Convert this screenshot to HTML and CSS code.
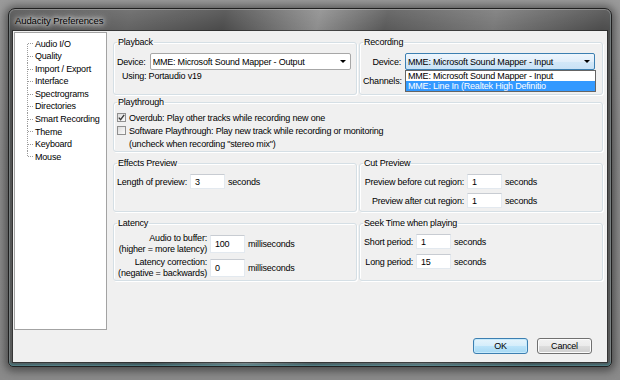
FILE: index.html
```html
<!DOCTYPE html>
<html>
<head>
<meta charset="utf-8">
<title>Audacity Preferences</title>
<link rel="stylesheet" href="styles.css">
</head>
<body>
<div class="window">
  <div class="titlebar"><span class="title">Audacity Preferences</span></div>
  <div class="client">
    <div class="main">
      <ul class="tree">
        <li>Audio I/O</li>
        <li>Quality</li>
        <li>Import / Export</li>
        <li>Interface</li>
        <li>Spectrograms</li>
        <li>Directories</li>
        <li>Smart Recording</li>
        <li>Theme</li>
        <li>Keyboard</li>
        <li>Mouse</li>
      </ul>
      <div class="pane">
        <div class="row row-io">
          <fieldset class="group">
            <legend>Playback</legend>
            <div class="field">
              <span class="label">Device:</span>
              <div class="combo combo-play"><span class="combo-text">MME: Microsoft Sound Mapper - Output</span><span class="arrow"></span></div>
            </div>
            <div class="using">Using: Portaudio v19</div>
          </fieldset>
          <fieldset class="group">
            <legend>Recording</legend>
            <div class="rec-grid">
              <span class="label r">Device:</span>
              <div class="combo-wrap">
                <div class="combo combo-focus"><span class="combo-text">MME: Microsoft Sound Mapper - Input</span><span class="arrow"></span></div>
                <ul class="dropdown">
                  <li>MME: Microsoft Sound Mapper - Input</li>
                  <li class="sel">MME: Line In (Realtek High Definitio</li>
                </ul>
              </div>
              <span class="label r">Channels:</span>
              <div class="combo combo-hidden"></div>
            </div>
          </fieldset>
        </div>
        <fieldset class="group playthrough">
          <legend>Playthrough</legend>
          <div class="check"><span class="cb"><svg viewBox="0 0 9 9" width="9" height="9"><path d="M1.8 4.6 L3.6 6.6 L7.2 1.8" fill="none" stroke="#3a3a3a" stroke-width="1.4"/></svg></span>Overdub: Play other tracks while recording new one</div>
          <div class="check"><span class="cb"></span>Software Playthrough: Play new track while recording or monitoring</div>
          <div class="note">(uncheck when recording "stereo mix")</div>
        </fieldset>
        <div class="row row-prev">
          <fieldset class="group">
            <legend>Effects Preview</legend>
            <div class="field pad">
              <span class="label">Length of preview:</span>
              <span class="input">3</span>
              <span class="unit">seconds</span>
            </div>
          </fieldset>
          <fieldset class="group">
            <legend>Cut Preview</legend>
            <div class="grid cut">
              <span class="label r">Preview before cut region:</span>
              <span class="input">1</span>
              <span class="unit">seconds</span>
              <span class="label r">Preview after cut region:</span>
              <span class="input">1</span>
              <span class="unit">seconds</span>
            </div>
          </fieldset>
        </div>
        <div class="row row-lat">
          <fieldset class="group">
            <legend>Latency</legend>
            <div class="grid lat">
              <span class="label r two">Audio to buffer:<br>(higher = more latency)</span>
              <span class="input tall">100</span>
              <span class="unit">milliseconds</span>
              <span class="label r two">Latency correction:<br>(negative = backwards)</span>
              <span class="input tall">0</span>
              <span class="unit">milliseconds</span>
            </div>
          </fieldset>
          <fieldset class="group">
            <legend>Seek Time when playing</legend>
            <div class="grid seek">
              <span class="label r">Short period:</span>
              <span class="input">1</span>
              <span class="unit">seconds</span>
              <span class="label r">Long period:</span>
              <span class="input">15</span>
              <span class="unit">seconds</span>
            </div>
          </fieldset>
        </div>
      </div>
    </div>
    <div class="buttons">
      <button class="btn btn-default">OK</button>
      <button class="btn">Cancel</button>
    </div>
  </div>
</div>
</body>
</html>
```
FILE: styles.css
```css
* { box-sizing: border-box; }

html, body {
  margin: 0;
  width: 620px;
  height: 380px;
  overflow: hidden;
}

body {
  background: linear-gradient(180deg, #9a9a9a 0%, #8e8e8e 40%, #8a8a8a 100%);
  font-family: "Liberation Sans", Arial, sans-serif;
  font-size: 9px;
  letter-spacing: -0.2px;
  color: #000;
}

.window {
  margin: 8px 0 0 8px;
  width: 604px;
  height: 359px;
  display: flex;
  flex-direction: column;
  border: 1px solid #202020;
  border-radius: 7px 7px 5px 5px;
  padding: 0 4px 4px 4px;
  background:
    linear-gradient(180deg, rgba(255,255,255,0.12) 0, rgba(255,255,255,0) 22px),
    linear-gradient(102deg, #4e4e4e 0%, #626262 18%, #4a4a4a 32%, #8c8c8c 46%, #585858 56%, #777 72%, #4c4c4c 88%, #5a5a5a 100%);
  box-shadow: 0 1px 9px 3px rgba(0,0,0,0.45), inset 0 -3px 3px -1px rgba(50,120,130,0.7), inset 0 0 0 1px rgba(255,255,255,0.25);
}

.titlebar {
  height: 22px;
  display: flex;
  align-items: center;
  padding-left: 2px;
}

.title {
  font-size: 9.5px;
  letter-spacing: -0.1px;
  color: #000;
  text-shadow: 0 0 4px #fff, 0 0 7px rgba(255,255,255,0.9), 0 0 10px rgba(255,255,255,0.7);
}

.client {
  flex: 1;
  background: #f0f0f0;
  display: flex;
  flex-direction: column;
  box-shadow: 0 0 0 1px rgba(30,30,30,0.6);
}

.main {
  display: flex;
  gap: 6px;
  padding: 1px 4px 0 1px;
}

.tree {
  list-style: none;
  margin: 0;
  width: 93px;
  height: 298px;
  background: #fff;
  border: 1px solid #a3a3a3;
  padding: 4.7px 0 0 12px;
}

.tree li {
  height: 12.56px;
  line-height: 12.56px;
  padding-left: 8px;
  white-space: nowrap;
  background-image:
    repeating-linear-gradient(180deg, #9c9c9c 0 1px, transparent 1px 2px),
    repeating-linear-gradient(90deg, #9c9c9c 0 1px, transparent 1px 2px);
  background-size: 1px 100%, 6px 1px;
  background-position: 0 0, 1px 50%;
  background-repeat: no-repeat;
}

.tree li:first-child { background-size: 1px 50%, 6px 1px; background-position: 0 100%, 1px 50%; }
.tree li:last-child { background-size: 1px 50%, 6px 1px; background-position: 0 0, 1px 50%; }

.pane {
  flex: 1;
  display: flex;
  flex-direction: column;
  margin-top: 5px;
}

.row {
  display: flex;
  gap: 2px;
}

.row > .group { flex: 1 1 0; min-width: 0; }

.group {
  margin: 0;
  padding: 0 3px;
  border: 1px solid #d5dfe5;
  border-radius: 3px;
  box-shadow: inset 1px 1px 0 #fff, 1px 1px 0 #fff;
  min-width: 0;
}

.group legend {
  padding: 0 1px;
  margin-left: 0;
  line-height: 11px;
  height: 11px;
}

.row-io .group { height: 58px; }
.playthrough { height: 55px; margin-top: 2px; }
.row-prev { margin-top: 6px; }
.row-prev .group { height: 54px; }
.row-lat { margin-top: 6px; }
.row-lat .group { height: 63px; }

.label { white-space: nowrap; }
.r { text-align: right; }

.field {
  display: flex;
  align-items: center;
  gap: 4px;
  margin-top: 5px;
}

.combo {
  position: relative;
  height: 17px;
  background: #fff;
  border: 1px solid #a7a7a7;
  border-radius: 2px;
  display: flex;
  align-items: center;
  padding-left: 2px;
}

.combo-play { width: 201px; }

.combo-text { flex: 1; white-space: nowrap; overflow: hidden; }

.arrow {
  width: 0;
  height: 0;
  border-left: 3px solid transparent;
  border-right: 3px solid transparent;
  border-top: 3px solid #000;
  margin-right: 4px;
}

.using {
  margin: 1px 0 0 5px;
  line-height: 11px;
}

.rec-grid {
  display: grid;
  grid-template-columns: 38px 190px;
  column-gap: 4px;
  row-gap: 2px;
  align-items: center;
  margin-top: 5px;
}

.combo-wrap { position: relative; }

.combo-focus {
  border-color: #3c7fb1;
  background: linear-gradient(180deg, #eef6fd 0%, #e1eefa 50%, #d3e8f8 51%, #c9e2f6 100%);
}

.combo-hidden { height: 17px; }

.dropdown {
  position: absolute;
  top: 17px;
  left: 0;
  width: 191px;
  margin: 0;
  padding: 0;
  list-style: none;
  background: #fff;
  border: 1px solid #646464;
  z-index: 2;
}

.dropdown li {
  height: 10px;
  line-height: 10px;
  padding-left: 2px;
  white-space: nowrap;
  overflow: hidden;
}

.dropdown li.sel {
  background: #3399ff;
  color: #fff;
}

.check {
  display: flex;
  align-items: center;
  height: 13px;
  gap: 3px;
}

.playthrough .check:first-of-type { margin-top: 3px; }

.cb {
  width: 9px;
  height: 9px;
  border: 1px solid #8f8f8f;
  background: linear-gradient(135deg, #dcdcdc, #fbfbfb);
  display: flex;
  align-items: center;
  justify-content: center;
  flex: none;
}

.cb svg { display: block; margin: -1px; }

.note {
  margin: 1px 0 0 12px;
  line-height: 12px;
}

.input {
  display: block;
  background: #fff;
  border: 1px solid #e3e9ef;
  border-top-color: #c8ccd2;
  height: 15px;
  width: 35px;
  padding: 1px 0 0 4px;
  line-height: 12px;
}

.pad { margin-top: 5px; gap: 3px; }
.pad .unit { margin-left: 0; }

.grid {
  display: grid;
  grid-template-columns: auto 35px auto;
  column-gap: 3px;
  align-items: center;
  justify-content: start;
}

.cut { margin-top: 5px; row-gap: 4px; }
.cut .label { min-width: 101px; }

.seek { margin-top: 5px; row-gap: 5px; grid-template-columns: 50px 35px auto; }

.lat { margin-top: 4px; row-gap: 2px; grid-template-columns: 90px 35px auto; }

.two { line-height: 11px; }

.input.tall { height: 18px; padding-top: 2px; }

.buttons {
  margin-top: auto;
  display: flex;
  justify-content: flex-end;
  gap: 9px;
  padding: 0 15px 8px 0;
}

.btn {
  width: 55px;
  height: 16px;
  padding: 0;
  font-family: inherit;
  font-size: 9px;
  letter-spacing: -0.2px;
  color: #000;
  border: 1px solid #707070;
  border-radius: 3px;
  background: linear-gradient(180deg, #f2f2f2 0%, #ebebeb 50%, #dddddd 51%, #cfcfcf 100%);
  box-shadow: inset 0 0 0 1px #fcfcfc;
}

.btn-default {
  border-color: #3c7fb1;
  background: linear-gradient(180deg, #e5f4fc 0%, #d4edfb 50%, #bce4fa 51%, #a6d8f3 100%);
  box-shadow: inset 0 0 0 1px #c6eafc;
}
```
